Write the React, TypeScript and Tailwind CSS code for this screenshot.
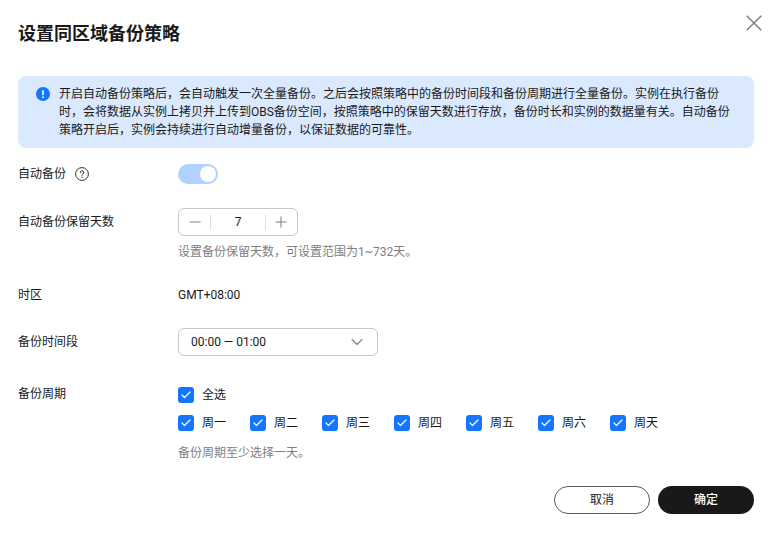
import { ChevronDown, Minus, Plus, Check } from 'lucide-react'

const days = ['周一', '周二', '周三', '周四', '周五', '周六', '周天']

function CheckItem({ label }: { label: string }) {
  return (
    <label className="flex w-[72px] items-center">
      <span className="flex h-4 w-4 items-center justify-center rounded-[3px] bg-[#1476ff]">
        <Check className="h-3 w-3 text-white" strokeWidth={2.5} />
      </span>
      <span className="ml-2 text-xs leading-4 text-[#191919]">{label}</span>
    </label>
  )
}

export default function App() {
  return (
    <div className="flex h-[534px] w-[776px] flex-col bg-white pl-[18px] pr-[22px] font-['Roboto','Noto_Sans_CJK_SC',sans-serif] text-xs text-[#191919]">
      <div className="flex items-start justify-between pt-[23px]">
        <h2 className="text-lg leading-[22px] font-bold">设置同区域备份策略</h2>
        <svg viewBox="0 0 16 16" fill="none" className="-mt-2 -mr-2 h-4 w-4 text-[#808080]">
          <path d="M.7.7l14.6 14.6M15.3.7L.7 15.3" stroke="currentColor" strokeWidth="1.5" />
        </svg>
      </div>

      <div className="mt-[31px] flex rounded-lg bg-[#dbe9ff] py-[9px] pr-4 pl-[18px]">
        <svg viewBox="0 0 14 14" className="mt-[2px] h-[14px] w-[14px] shrink-0">
          <circle cx="7" cy="7" r="7" fill="#1476ff" />
          <rect x="6.2" y="3" width="1.6" height="5.4" rx="0.8" fill="white" />
          <circle cx="7" cy="10.2" r="0.95" fill="white" />
        </svg>
        <p className="ml-[9px] leading-[18px]">
          开启自动备份策略后，会自动触发一次全量备份。之后会按照策略中的备份时间段和备份周期进行全量备份。实例在执行备份时，会将数据从实例上拷贝并上传到OBS备份空间，按照策略中的保留天数进行存放，备份时长和实例的数据量有关。自动备份策略开启后，实例会持续进行自动增量备份，以保证数据的可靠性。
        </p>
      </div>

      <div className="mt-4 flex h-5 items-center">
        <div className="flex w-40 items-center">
          <span>自动备份</span>
          <svg viewBox="0 0 14 14" fill="none" className="ml-[9px] h-[14px] w-[14px] text-[#333]">
            <circle cx="7" cy="7" r="6.4" stroke="currentColor" strokeWidth="1" />
            <path d="M5.3 5.5a1.75 1.75 0 1 1 2.6 1.5c-.6.35-.9.65-.9 1.3" stroke="currentColor" strokeWidth="1" strokeLinecap="round" />
            <circle cx="7" cy="10.2" r="0.65" fill="currentColor" />
          </svg>
        </div>
        <div className="flex h-5 w-10 items-center justify-end rounded-full bg-[#b1d2ff] pr-[2px]">
          <span className="h-4 w-4 rounded-full bg-white" />
        </div>
      </div>

      <div className="mt-6 flex">
        <div className="w-40 pt-[5px] leading-[18px]">自动备份保留天数</div>
        <div>
          <div className="flex h-7 w-[120px] items-center rounded-md border border-[#c7c7c7]">
            <span className="flex h-4 w-8 items-center justify-center border-r border-[#dfdfdf]">
              <Minus className="h-[18px] w-[18px] shrink-0 text-[#808080]" strokeWidth={1.4} />
            </span>
            <span className="flex-1 text-center">7</span>
            <span className="flex h-4 w-8 items-center justify-center border-l border-[#dfdfdf] pr-[2px]">
              <Plus className="h-[18px] w-[18px] shrink-0 text-[#808080]" strokeWidth={1.4} />
            </span>
          </div>
          <p className="mt-[7px] leading-[18px] text-[#808080]">设置备份保留天数，可设置范围为1~732天。</p>
        </div>
      </div>

      <div className="mt-[25px] flex leading-[18px]">
        <div className="w-40">时区</div>
        <div>GMT+08:00</div>
      </div>

      <div className="mt-[24px] flex">
        <div className="w-40 pt-[5px] leading-[18px]">备份时间段</div>
        <div className="flex h-7 w-[200px] items-center justify-between rounded-md border border-[#c7c7c7] pr-[10px] pl-3">
          <span>00:00 — 01:00</span>
          <ChevronDown className="h-5 w-5 text-[#808080]" strokeWidth={1.3} />
        </div>
      </div>

      <div className="mt-[29px] flex">
        <div className="w-40 leading-[18px]">备份周期</div>
        <div className="pt-[2px]">
          <CheckItem label="全选" />
          <div className="mt-3 flex">
            {days.map((day) => (
              <CheckItem key={day} label={day} />
            ))}
          </div>
          <p className="mt-[13px] leading-[18px] text-[#808080]">备份周期至少选择一天。</p>
        </div>
      </div>

      <div className="mt-[24px] flex justify-end gap-2">
        <button className="h-7 w-24 rounded-full border border-[#595959] bg-white">取消</button>
        <button className="h-7 w-24 rounded-full bg-[#191919] font-medium text-white">确定</button>
      </div>
    </div>
  )
}
